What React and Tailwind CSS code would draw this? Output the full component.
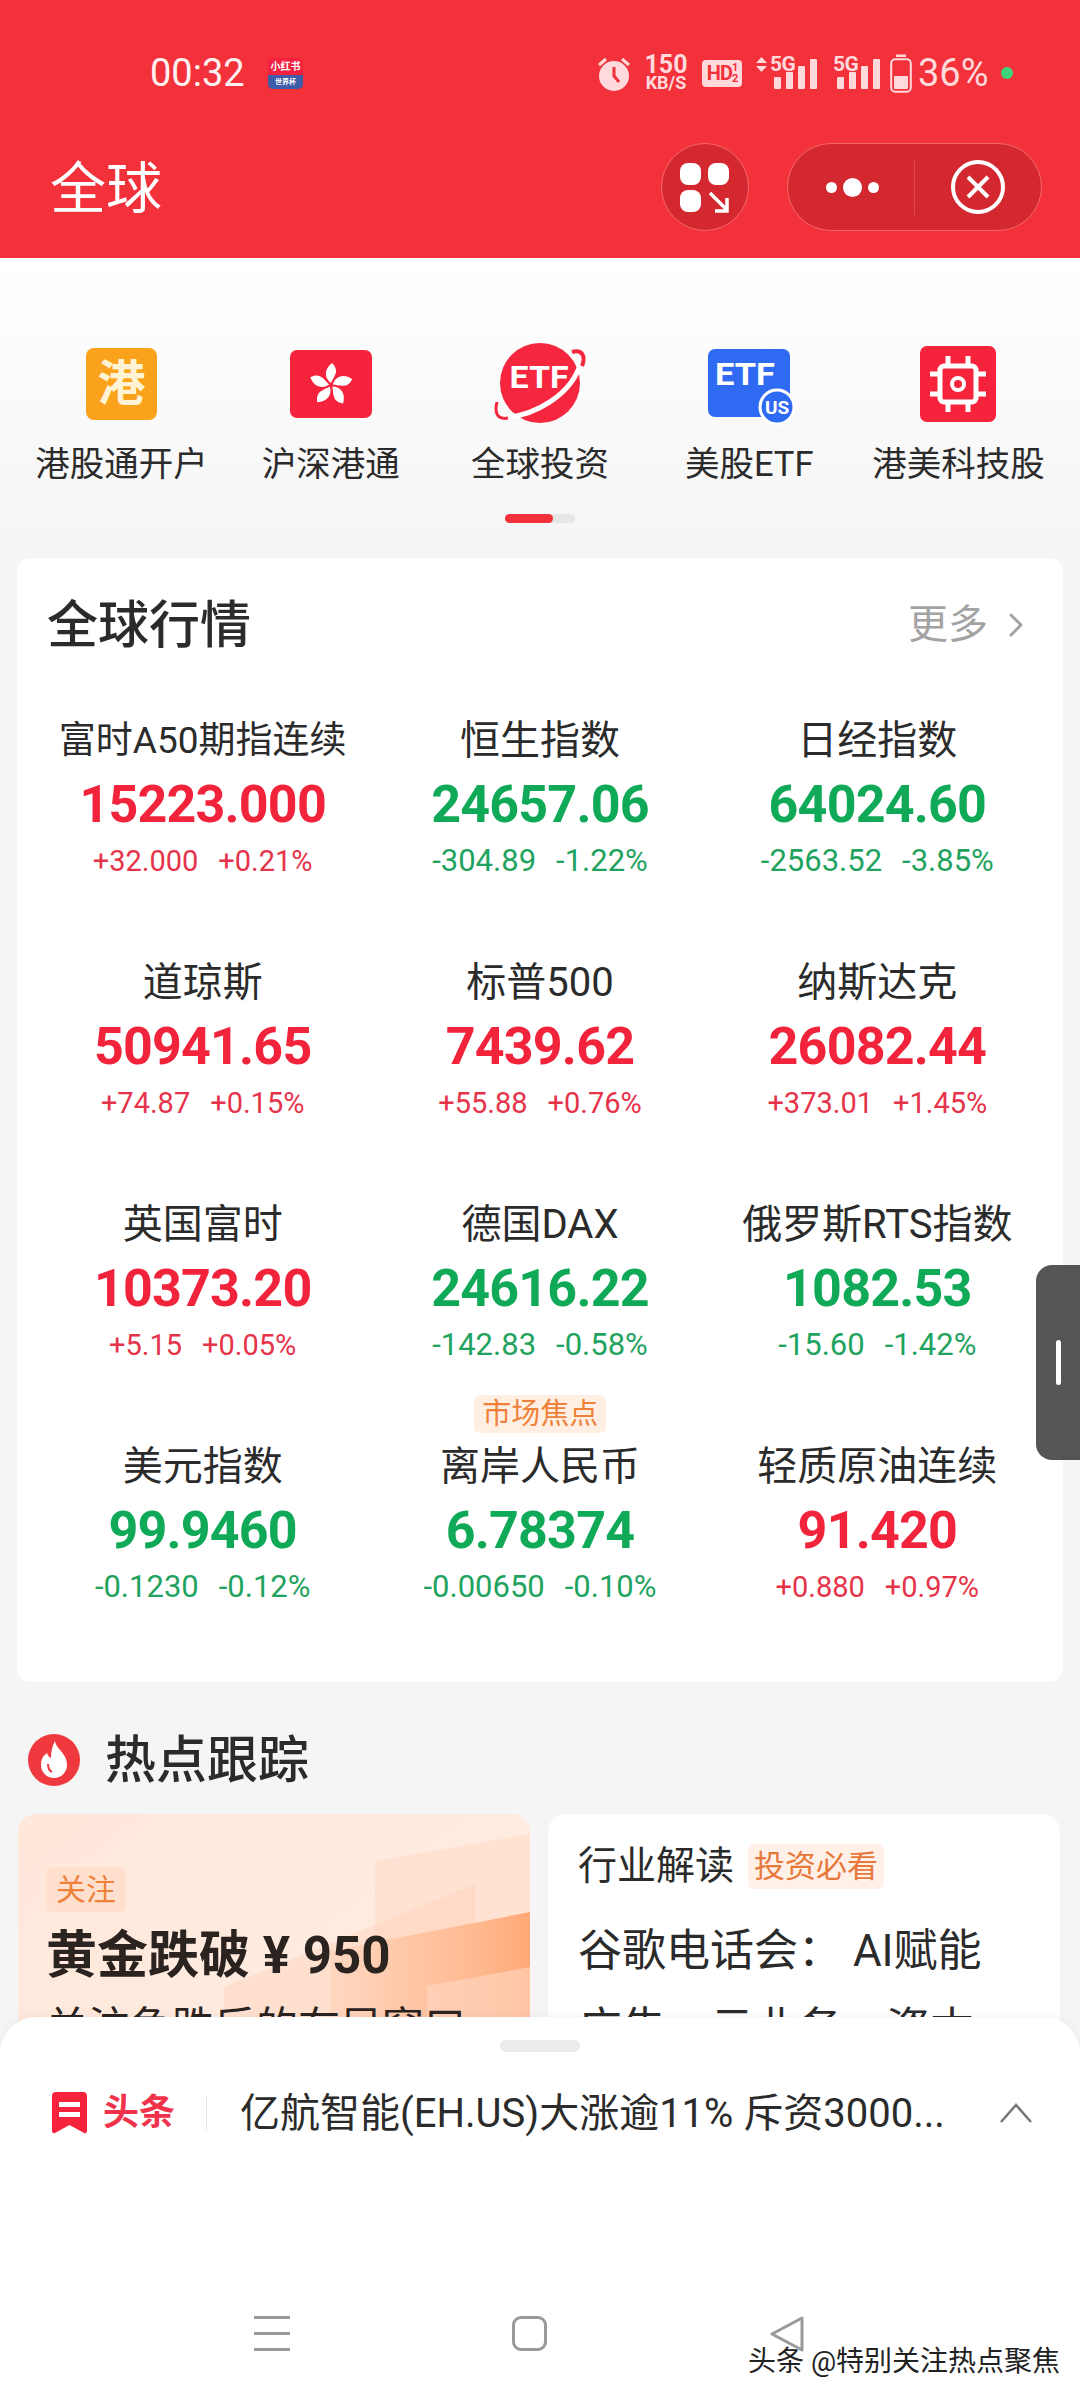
import { ChevronRight } from 'lucide-react'

const CJK = '[font-family:Roboto,"Noto_Sans_CJK_SC",sans-serif]'

const MARKETS = [
  { name: '富时A50期指连续', value: '15223.000', diff: '+32.000', pct: '+0.21%', up: true, tight: true },
  { name: '恒生指数', value: '24657.06', diff: '-304.89', pct: '-1.22%' },
  { name: '日经指数', value: '64024.60', diff: '-2563.52', pct: '-3.85%' },
  { name: '道琼斯', value: '50941.65', diff: '+74.87', pct: '+0.15%', up: true },
  { name: '标普500', value: '7439.62', diff: '+55.88', pct: '+0.76%', up: true },
  { name: '纳斯达克', value: '26082.44', diff: '+373.01', pct: '+1.45%', up: true },
  { name: '英国富时', value: '10373.20', diff: '+5.15', pct: '+0.05%', up: true },
  { name: '德国DAX', value: '24616.22', diff: '-142.83', pct: '-0.58%' },
  { name: '俄罗斯RTS指数', value: '1082.53', diff: '-15.60', pct: '-1.42%' },
  { name: '美元指数', value: '99.9460', diff: '-0.1230', pct: '-0.12%' },
  { name: '离岸人民币', value: '6.78374', diff: '-0.00650', pct: '-0.10%', badge: '市场焦点' },
  { name: '轻质原油连续', value: '91.420', diff: '+0.880', pct: '+0.97%', up: true },
]

function Bars() {
  return (
    <svg width="44" height="31" viewBox="0 0 44 31" fill="#FFD9DC">
      <rect x="1" y="19" width="7" height="12" rx="1" />
      <rect x="13" y="14" width="7" height="17" rx="1" />
      <rect x="25" y="8" width="7" height="23" rx="1" />
      <rect x="37" y="1" width="7" height="30" rx="1" />
    </svg>
  )
}

function StatusBar() {
  return (
    <div className="flex h-[40px] items-center pl-[150px] pr-[67px] text-[#FFD9DC]">
      <span className="w-[95px] whitespace-nowrap text-[38px] leading-none text-[#FFF1F1]">00:32</span>
      <div className="ml-[23px] flex h-[31px] w-[35px] flex-col overflow-hidden rounded-[5px] bg-[#F2213F]">
        <span className="h-[17px] text-center text-[10px] font-bold leading-[17px] text-white">小红书</span>
        <span className="h-[14px] bg-[#3F5CA8] text-center text-[7px] font-bold leading-[14px] text-white">世界杯</span>
      </div>
      <div className="ml-auto flex items-center">
        <svg width="32" height="35" viewBox="0 0 32 35">
          <circle cx="16" cy="20" r="15" fill="#FFD9DC" />
          <path d="M16 11v9l5 6" fill="none" stroke="#F2313A" strokeWidth="3" />
          <path d="M1 9l7-6M31 9l-7-6" stroke="#FFD9DC" strokeWidth="3" />
        </svg>
        <div className="ml-[15px] flex w-[42px] flex-col items-center font-bold">
          <span className="text-[25px] leading-[20px]">150</span>
          <span className="text-[18px] leading-[16px]">KB/S</span>
        </div>
        <div className="ml-[15px] flex h-[27px] w-[40px] items-center justify-center rounded-[4px] bg-[#FFD9DC] text-[20px] font-bold leading-none tracking-[-1px] text-[#F2313A]">
          <span>HD</span>
          <span className="flex flex-col text-[11px] leading-[11px]"><span>1</span><span>2</span></span>
        </div>
        <div className="relative ml-[14px] h-[32px] w-[61px]">
          <svg className="absolute left-0 top-0" width="11" height="15" viewBox="0 0 11 15" fill="#FFD9DC">
            <path d="M5.500 0L11 6H0ZM0 9H11L5.500 15Z" />
          </svg>
          <span className="absolute left-[14px] top-[-2px] text-[21px] font-bold leading-[18px] tracking-[-0.5px]">5G</span>
          <div className="absolute bottom-0 left-[17px]"><Bars /></div>
        </div>
        <div className="relative ml-[16px] h-[32px] w-[47px]">
          <span className="absolute left-0 top-[-2px] text-[21px] font-bold leading-[18px] tracking-[-0.5px]">5G</span>
          <div className="absolute bottom-0 left-[3px]"><Bars /></div>
        </div>
        <svg className="ml-[10px]" width="22" height="39" viewBox="0 0 22 39">
          <rect x="6" y="0.5" width="10" height="2.500" fill="#FFD9DC" />
          <rect x="1.200" y="5.200" width="19.600" height="32.600" rx="4" fill="none" stroke="#FFD9DC" strokeWidth="2" />
          <rect x="4" y="22" width="14" height="13" rx="1" fill="#FFD9DC" />
        </svg>
        <span className="ml-[6px] w-[71px] whitespace-nowrap text-[38px] leading-none">36%</span>
        <span className="ml-[12px] size-[12px] rounded-full bg-[#3DD47E]" />
      </div>
    </div>
  )
}

function Header() {
  return (
    <header className="h-[258px] bg-[#F2313A] pt-[53px]">
      <StatusBar />
      <div className="mt-[50px] flex h-[88px] items-center pl-[50px] pr-[38px]">
        <span className="mt-[3px] text-[56px] leading-none text-white">全球</span>
        <button className="ml-auto size-[88px] rounded-full border border-[#F7686D] bg-[#D3282F]">
          <svg width="86" height="86" viewBox="0 0 86 86">
            <rect x="18" y="19" width="21" height="22" rx="8" fill="#fff" />
            <rect x="46" y="19" width="21" height="22" rx="8" fill="#fff" />
            <rect x="18" y="46" width="21" height="22" rx="8" fill="#fff" />
            <path d="M48 49l17 17M65 54v13H53" fill="none" stroke="#fff" strokeWidth="3.500" />
          </svg>
        </button>
        <div className="ml-[38px] flex h-[88px] w-[255px] items-center rounded-full border border-[#F7686D] bg-[#D3282F]">
          <div className="flex w-[126px] items-center justify-center gap-[6px] pl-[2px]">
            <span className="size-[11px] rounded-full bg-white" />
            <span className="size-[19px] rounded-full bg-white" />
            <span className="size-[11px] rounded-full bg-white" />
          </div>
          <div className="h-[56px] w-px bg-[#E2484E]" />
          <div className="flex flex-1 justify-center">
            <svg width="56" height="56" viewBox="0 0 56 56" fill="none" stroke="#fff" strokeWidth="4">
              <circle cx="28" cy="28" r="25" />
              <path d="M18 18l20 20M38 18L18 38" />
            </svg>
          </div>
        </div>
      </div>
    </header>
  )
}

function GangIcon() {
  return (
    <div className="flex h-[72px] w-[71px] items-center justify-center rounded-[8px] bg-[#FBA21C] text-[48px] font-bold leading-none text-[#FFF3D6]">港</div>
  )
}

function FlagIcon() {
  return (
    <svg width="82" height="68" viewBox="0 0 82 68">
      <rect width="82" height="68" rx="7" fill="#F5233B" />
      {[0, 72, 144, 216, 288].map((deg) => (
        <path key={deg} transform={`rotate(${deg} 41 35)`} d="M41 33C34 28 34 19 42 13C46 17 47 21 45 25C44 28 42 30 41 33Z" fill="#fff" />
      ))}
    </svg>
  )
}

function GlobeIcon() {
  return (
    <svg width="92" height="84" viewBox="0 0 92 84">
      <circle cx="46" cy="41" r="40" fill="#F5263D" />
      <path d="M6 76C38 75 80 54 88 16" fill="none" stroke="#fff" strokeWidth="5" />
      <path d="M3 60C0 72 4 78 14 76" fill="none" stroke="#F5263D" strokeWidth="3" />
      <path d="M78 10C88 7 92 14 88 24" fill="none" stroke="#F5263D" strokeWidth="4" />
      <text x="45" y="46" textAnchor="middle" textLength="59" lengthAdjust="spacingAndGlyphs" fontFamily="Roboto" fontWeight="700" fontSize="32" fill="#fff">ETF</text>
    </svg>
  )
}

function BlueIcon() {
  return (
    <svg width="94" height="84" viewBox="0 0 94 84">
      <rect x="6" y="7" width="82" height="68" rx="7" fill="#2F6BF2" />
      <text x="43" y="43" textAnchor="middle" textLength="60" lengthAdjust="spacingAndGlyphs" fontFamily="Roboto" fontWeight="700" fontSize="31" fill="#fff">ETF</text>
      <circle cx="75" cy="65" r="17" fill="#2F6BF2" stroke="#fff" strokeWidth="3" />
      <text x="75" y="72" textAnchor="middle" fontFamily="Roboto" fontWeight="700" fontSize="19" fill="#fff">US</text>
    </svg>
  )
}

function ChipIcon() {
  return (
    <svg width="76" height="76" viewBox="0 0 76 76">
      <rect width="76" height="76" rx="7" fill="#F5233B" />
      <rect x="20" y="20" width="36" height="36" rx="4" fill="none" stroke="#fff" strokeWidth="5" />
      <circle cx="38" cy="38" r="6" fill="none" stroke="#fff" strokeWidth="4" />
      <path d="M28 10v10M48 10v10M28 56v10M48 56v10M10 28h10M10 48h10M56 28h10M56 48h10" stroke="#fff" strokeWidth="5" />
    </svg>
  )
}

const NAV = [
  { label: '港股通开户', icon: <GangIcon /> },
  { label: '沪深港通', icon: <FlagIcon /> },
  { label: '全球投资', icon: <GlobeIcon /> },
  { label: '美股ETF', icon: <BlueIcon /> },
  { label: '港美科技股', icon: <ChipIcon /> },
]

function NavRow() {
  return (
    <section className="h-[300px] bg-gradient-to-b from-white to-[#F5F5F5] pt-[84px]">
      <div className="grid grid-cols-5 px-[17px]">
        {NAV.map((item) => (
          <div key={item.label} className="flex flex-col items-center">
            <div className="flex h-[84px] items-center justify-center">{item.icon}</div>
            <span className="mt-[14px] whitespace-nowrap text-[34.500px] leading-[48px] text-[#2b2b2b]">{item.label}</span>
          </div>
        ))}
      </div>
      <div className="mt-[26px] flex justify-center">
        <div className="flex h-[9px] w-[70px] rounded-full bg-[#E6E6E6]">
          <div className="h-[9px] w-[48px] rounded-full bg-[#F2313A]" />
        </div>
      </div>
    </section>
  )
}

function MarketCell({ item }) {
  const main = item.up ? 'text-[#F1243C]' : 'text-[#0FA958]'
  const sub = item.up ? 'text-[29px] text-[#E6334A]' : 'text-[31px] text-[#1FA35F]'
  return (
    <div className="relative flex h-[242px] flex-col items-center pt-[3px]">
      {item.badge && (
        <span className="absolute left-[103px] top-[-44px] h-[38px] w-[132px] rounded-[6px] bg-[#FFEFE3] text-center text-[29px] leading-[38px] text-[#F0813A]">{item.badge}</span>
      )}
      <span className={`h-[50px] whitespace-nowrap leading-[50px] text-[#2b2b2b] ${item.tight ? 'text-[37px]' : 'text-[40px]'}`}>{item.name}</span>
      <span className={`mt-[9px] h-[60px] text-[52px] font-bold leading-[60px] tracking-[-0.800px] ${main}`}>{item.value}</span>
      <span className={`mt-[8px] flex h-[36px] gap-[20px] leading-[36px] ${sub}`}>
        <span>{item.diff}</span>
        <span>{item.pct}</span>
      </span>
    </div>
  )
}

function MarketCard() {
  return (
    <section className="mx-[17px] h-[1124px] rounded-[14px] bg-white">
      <div className="flex h-[128px] items-center pl-[30px] pr-[27px] pt-[6px]">
        <h2 className="text-[51px] font-medium leading-none text-[#2b2b2b]">全球行情</h2>
        <span className="ml-auto text-[40px] leading-none text-[#A3A3A3]">更多</span>
        <ChevronRight className="ml-[8px] text-[#A3A3A3]" size={40} strokeWidth={1.800} />
      </div>
      <div className="mt-[27px] grid grid-cols-3 px-[17px]">
        {MARKETS.map((item) => <MarketCell key={item.name} item={item} />)}
      </div>
    </section>
  )
}

function HotSection() {
  return (
    <section className="h-[600px] pt-[52px]">
      <div className="flex h-[52px] items-center pl-[28px]">
        <svg width="52" height="52" viewBox="0 0 52 52">
          <circle cx="26" cy="26" r="26" fill="#F0393F" />
          <path d="M27 7c1 8 12 12 12 24a13 13 0 0 1-26 0c0-6 2-9 6-12 1 3 2 4 4 5 0-6 1-12 4-17Z" fill="#fff" />
          <path d="M20 30c0 4 2 7 4 8" fill="none" stroke="#F0393F" strokeWidth="2" />
        </svg>
        <h2 className="ml-[25px] text-[51px] font-medium leading-none text-[#2b2b2b]">热点跟踪</h2>
      </div>
      <div className="mt-[28px] flex gap-[18px] pl-[18px] pr-[20px]">
        <div className="relative h-[400px] w-[512px] overflow-hidden rounded-[18px] bg-gradient-to-br from-[#FFE7DA] to-[#FFEFE6] pl-[28px] pt-[53px]">
          <svg className="absolute left-0 top-0" width="512" height="400" viewBox="0 0 512 400">
            <defs>
              <linearGradient id="hotFade" x1="0" y1="0" x2="1" y2="0">
                <stop offset="0" stopColor="#FFCDB0" stopOpacity="0.5" />
                <stop offset="1" stopColor="#FFA875" />
              </linearGradient>
            </defs>
            <path d="M357 47L512 20V400H357Z" fill="#FFD6C0" opacity="0.45" />
            <path d="M206 173L457 70V400H206Z" fill="#FFD3BB" opacity="0.45" />
            <path d="M312 137L512 98V400H312Z" fill="url(#hotFade)" />
            <path d="M409 172L512 153V400H409Z" fill="#FFD9C4" opacity="0.6" />
          </svg>
          <div className="relative">
            <span className="block h-[45px] w-[80px] rounded-[6px] bg-[#FFE0CE] text-center text-[30px] leading-[45px] text-[#F0813A]">关注</span>
            <p className="mt-[21px] whitespace-nowrap text-[51px] font-bold leading-[46px] text-[#2b2320]">黄金跌破 ¥ 950</p>
            <p className="mt-[19px] whitespace-nowrap text-[42px] leading-[60px] text-[#2b2320]">关注急跌后的布局窗口</p>
          </div>
        </div>
        <div className="h-[400px] w-[512px] rounded-[18px] bg-white pl-[30px] pt-[30px]">
          <div className="flex h-[45px] items-center">
            <span className="text-[39px] leading-none text-[#2b2b2b]">行业解读</span>
            <span className="ml-[14px] h-[45px] rounded-[6px] bg-[#FFF0E8] px-[6px] text-[31px] leading-[45px] text-[#E8783A]">投资必看</span>
          </div>
          <p className="mt-[23px] w-[430px] text-[44px] leading-[78px] text-[#2b2b2b]">谷歌电话会： AI赋能广告、云业务、资本</p>
        </div>
      </div>
    </section>
  )
}

function BottomSheet() {
  return (
    <div className="absolute bottom-0 left-0 right-0 h-[383px] rounded-t-[36px] bg-white shadow-[0_-2px_8px_rgba(0,0,0,0.04)]">
      <div className="mx-auto mt-[23px] h-[12px] w-[80px] rounded-full bg-[#ECECEC]" />
      <div className="mt-[31px] flex h-[60px] items-center pl-[52px] pr-[47px]">
        <svg width="35" height="42" viewBox="0 0 35 42">
          <path d="M4 0h27a4 4 0 0 1 4 4v36l-2 1.500L17.500 33 2 41.500 0 40V4a4 4 0 0 1 4-4Z" fill="#F5233B" />
          <rect x="7" y="10" width="21" height="5" fill="#fff" />
          <rect x="7" y="20" width="21" height="5" fill="#fff" />
        </svg>
        <span className="ml-[16px] text-[36px] font-bold leading-none text-[#F0334A]">头条</span>
        <div className="ml-[31px] h-[36px] w-px bg-[#E8E8E8]" />
        <span className="ml-[33px] mt-[2px] w-[706px] whitespace-nowrap text-[40px] leading-none text-[#2b2b2b]">亿航智能(EH.US)大涨逾11% 斥资3000...</span>
        <svg className="ml-auto" width="34" height="20" viewBox="0 0 34 20" fill="none" stroke="#777" strokeWidth="2.500">
          <path d="M2 19L17 2L32 19" />
        </svg>
      </div>
      <div className="relative mt-[173px] h-[35px]">
        <div className="absolute left-[254px] flex h-[35px] w-[36px] flex-col justify-between">
          <span className="h-[3px] bg-[#999]" />
          <span className="h-[3px] bg-[#999]" />
          <span className="h-[3px] bg-[#999]" />
        </div>
        <div className="absolute left-[512px] size-[35px] rounded-[9px] border-[3px] border-[#999]" />
        <svg className="absolute left-[768px]" width="38" height="36" viewBox="0 0 38 36" fill="none" stroke="#999" strokeWidth="3">
          <path d="M34 2V34L4 18Z" strokeLinejoin="round" />
        </svg>
      </div>
      <span className="absolute left-[748px] top-[327px] whitespace-nowrap text-[28px] leading-[36px] text-[#222] [text-shadow:0_0_2px_#fff,0_0_2px_#fff]">头条 @特别关注热点聚焦</span>
    </div>
  )
}

export default function App() {
  return (
    <div className={`relative h-[2400px] w-[1080px] overflow-hidden bg-[#F5F5F5] ${CJK}`}>
      <Header />
      <NavRow />
      <MarketCard />
      <HotSection />
      {/* side drawer handle */}
      <div className="absolute right-0 top-[1265px] flex h-[195px] w-[44px] items-center justify-center rounded-l-[16px] bg-[#555]">
        <div className="h-[45px] w-[5px] rounded-full bg-white" />
      </div>
      <BottomSheet />
    </div>
  )
}
